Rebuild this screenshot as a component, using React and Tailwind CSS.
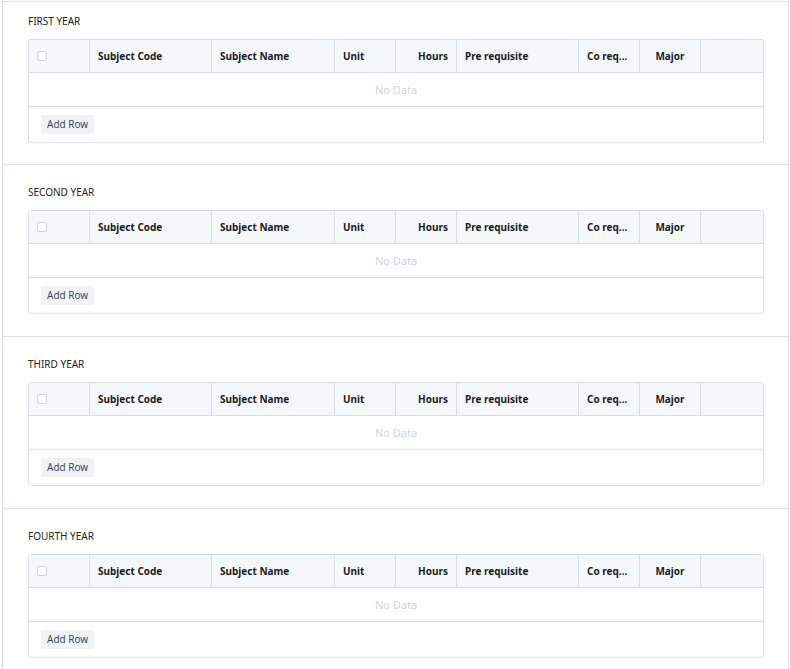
const columns = [
  { key: "check", label: "", width: "w-[61px]", align: "text-left" },
  { key: "code", label: "Subject Code", width: "w-[122px]", align: "text-left" },
  { key: "name", label: "Subject Name", width: "w-[123px]", align: "text-left" },
  { key: "unit", label: "Unit", width: "w-[61px]", align: "text-left" },
  { key: "hours", label: "Hours", width: "w-[61px]", align: "text-right" },
  { key: "pre", label: "Pre requisite", width: "w-[122px]", align: "text-left" },
  { key: "co", label: "Co req...", width: "w-[61px]", align: "text-left" },
  { key: "major", label: "Major", width: "w-[61px]", align: "text-center" },
  { key: "action", label: "", width: "flex-1", align: "text-left" },
];

const years = ["First Year", "Second Year", "Third Year", "Fourth Year"];

const YearTable = ({ title, first }) => {
  return (
    <section
      className={`border-b border-[#d9dee4] pl-[25px] pr-[24px] ${
        first ? "pt-[12px] pb-[21px]" : "pt-[20px] pb-[22px]"
      }`}
    >
      <h2 className="text-[10px] leading-[14px] uppercase text-[#222] mb-[11px]">
        {title}
      </h2>
      <div className="border border-[#d9dee4] rounded-[3px]">
        {/* header */}
        <div className="flex h-[33px] bg-[#f5f8fb] border-b border-[#d9dee4]">
          {columns.map((col, i) => (
            <div
              key={col.key}
              className={`${col.width} ${col.align} ${
                i < columns.length - 1 ? "border-r border-[#d9dee4]" : ""
              } px-2 flex items-center text-[10px] font-bold text-[#1b1b1b] whitespace-nowrap`}
            >
              {col.key === "check" ? (
                <span className="block w-[10px] h-[10px] border border-[#cfd5dc] rounded-[2px] bg-white" />
              ) : (
                <span className="block w-full">{col.label}</span>
              )}
            </div>
          ))}
        </div>
        {/* empty body */}
        <div className="h-[34px] pt-px flex items-center justify-center border-b border-[#d9dee4] text-[11px] text-[#cdd5de]">
          No Data
        </div>
        {/* footer */}
        <div className="h-[35px] flex items-center px-3">
          <button className="h-[19px] px-[6px] rounded-[2px] bg-[#f0f3f6] text-[10px] text-[#3b4a5a]">
            Add Row
          </button>
        </div>
      </div>
    </section>
  );
};

const App = () => {
  return (
    <div
      className="bg-white min-h-[669px]"
      style={{ fontFamily: '"Noto Sans", "Open Sans", sans-serif' }}
    >
      <div className="ml-[2px] w-[787px] mt-px border-t border-x border-[#d9dee4]">
        {years.map((y, i) => (
          <YearTable key={y} title={y} first={i === 0} />
        ))}
      </div>
    </div>
  );
};

export default App;
